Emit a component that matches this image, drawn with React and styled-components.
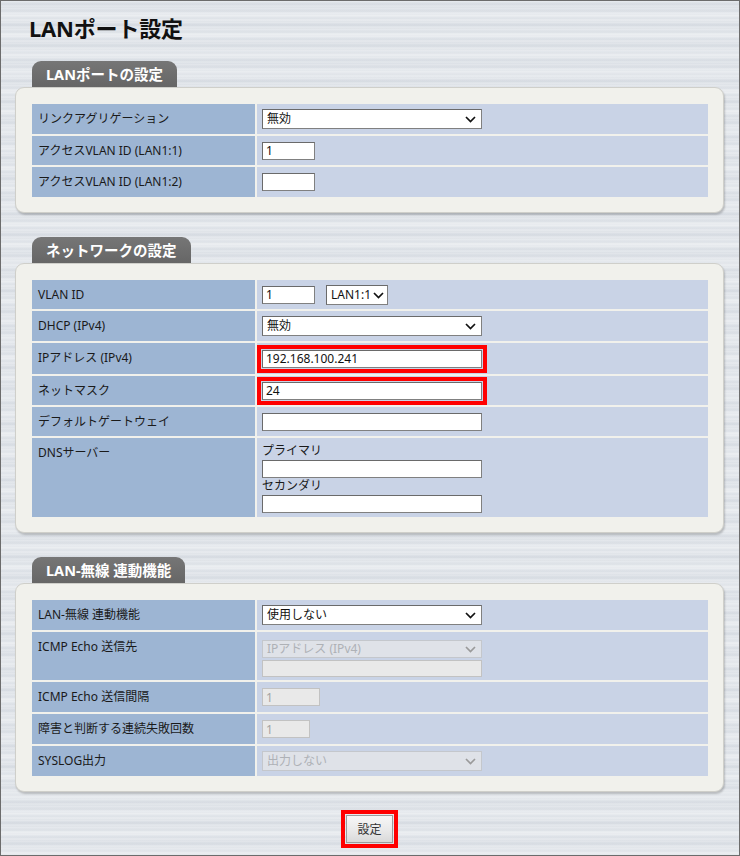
import React from "react";
import styled, { createGlobalStyle, css } from "styled-components";

const FONT = `"Noto Sans", "Noto Sans CJK JP", sans-serif`;

const GlobalStyle = createGlobalStyle`
  html, body { margin: 0; padding: 0; }
  body { font-family: ${FONT}; }
  * { box-sizing: border-box; }
`;

const Page = styled.div`
  width: 740px;
  height: 856px;
  border: 1px solid #6c6c6c;
  padding: 13px 15px 0 14px;
  background-color: #e1e5ea;
  background-image:
    repeating-linear-gradient(180deg, rgba(255,255,255,0.35) 0px, rgba(255,255,255,0) 1px, rgba(0,0,0,0) 2px, rgba(150,160,175,0.10) 3px, rgba(0,0,0,0) 4px, rgba(255,255,255,0.25) 5px, rgba(0,0,0,0) 7px),
    repeating-linear-gradient(180deg, rgba(160,170,185,0) 0px, rgba(160,170,185,0.10) 5px, rgba(160,170,185,0) 11px, rgba(255,255,255,0.22) 15px, rgba(160,170,185,0) 19px);
  font-family: ${FONT};
  color: #222;
`;

const Title = styled.h1`
  height: 28px;
  margin: 0 0 19px 14px;
  font-family: ${FONT};
  font-size: 22px;
  line-height: 28px;
  font-weight: 700;
  color: #111;
  letter-spacing: -0.2px;
`;

const Section = styled.section`
  margin-bottom: ${(p) => p.$gap}px;
`;

const Tab = styled.div`
  display: block;
  width: fit-content;
  margin-left: 17px;
  height: 26px;
  overflow: hidden;
  padding: 0 14px;
  border-radius: 9px 9px 0 0;
  background: linear-gradient(180deg, #767676 0%, #666 100%);
  color: #fff;
  font-size: 14.5px;
  font-weight: 700;
  line-height: 27px;
`;

const Panel = styled.div`
  width: 709px;
  padding: 16px 15px 15px 16px;
  background: #f1f1ec;
  border: 1px solid #cfcfca;
  border-radius: 9px;
  box-shadow: 1px 2px 2px rgba(0, 0, 0, 0.2);
`;

const Table = styled.div`
  display: flex;
  flex-direction: column;
  gap: 2px;
`;

const Row = styled.div`
  display: grid;
  grid-template-columns: 223px 1fr;
  column-gap: 2px;
  height: ${(p) => p.$h || 30}px;
`;

const Label = styled.div`
  background: #9db5d3;
  padding: 7px 6px 0 6px;
  font-size: 12px;
  font-weight: 400;
  line-height: 16px;
  color: #1a1a1a;
  overflow: hidden;
`;

const Value = styled.div`
  background: #c9d3e6;
  padding: 0 5px;
  display: flex;
  ${(p) =>
    p.$stack
      ? css`
          padding-top: ${p.$pt || 5}px;
          flex-direction: column;
          align-items: flex-start;
          justify-content: flex-start;
        `
      : css`
          align-items: center;
          gap: 11px;
        `}
`;

const fieldBase = css`
  font-family: ${FONT};
  font-size: 12px;
  font-weight: 400;
  color: #111;
  background: #fff;
  border: 1px solid #808080;
  border-top-color: #6a6a6a;
  border-left-color: #6a6a6a;
  border-radius: 0;
  outline: none;
  margin: 0;
  ${(p) =>
    p.disabled &&
    css`
      background: #e9e9e9;
      color: #a3a3a3;
      border-color: #c2c2c2;
    `}
`;

const TextInput = styled.input`
  ${fieldBase};
  display: block;
  width: ${(p) => p.$w || 220}px;
  height: ${(p) => p.$h || 18}px;
  padding: 0 3px;
  line-height: 16px;
  ${(p) =>
    p.$mark &&
    css`
      outline: 4px solid #ff0000;
      outline-offset: 1px;
    `}
`;

const SelectWrap = styled.div`
  position: relative;
  width: ${(p) => p.$w || 220}px;
  height: ${(p) => p.$h || 20}px;
  flex: none;
`;

const Select = styled.select`
  ${fieldBase};
  display: block;
  appearance: none;
  -webkit-appearance: none;
  width: 100%;
  height: 100%;
  padding: 0 ${(p) => p.$pr}px 0 4px;
  line-height: 16px;
`;

const Chevron = styled.svg`
  position: absolute;
  right: ${(p) => p.$r}px;
  top: 50%;
  margin-top: -3px;
  pointer-events: none;
`;

const SubLabel = styled.div`
  font-size: 12px;
  line-height: 14px;
  color: #1a1a1a;
  margin: 1px 0 2px 0;
`;

const Footer = styled.div`
  display: flex;
  justify-content: center;
`;

const Button = styled.button`
  width: 47px;
  height: 28px;
  font-family: ${FONT};
  font-size: 12px;
  color: #333;
  background: linear-gradient(180deg, #f7f7f7 0%, #e9e9e9 55%, #d9d9d9 100%);
  border: 1px solid #9c9c9c;
  border-radius: 0;
  outline: 4px solid #ff0000;
  outline-offset: 1px;
  padding: 0;
`;

function Dropdown({ value, w, h, disabled, compact }) {
  return (
    <SelectWrap $w={w} $h={h}>
      <Select disabled={disabled} value={value} onChange={() => {}} $pr={compact ? 14 : 20}>
        <option>{value}</option>
      </Select>
      <Chevron $r={compact ? 4 : 6} width="11" height="7" viewBox="0 0 11 7">
        <polyline
          points="1,1 5.5,5.5 10,1"
          fill="none"
          stroke={disabled ? "#9a9a9a" : "#111"}
          strokeWidth="1.7"
        />
      </Chevron>
    </SelectWrap>
  );
}

export default function App() {
  return (
    <>
      <GlobalStyle />
      <Page>
        <Title>LANポート設定</Title>

        <Section $gap={24}>
          <Tab>LANポートの設定</Tab>
          <Panel>
            <Table>
              <Row $h={30}>
                <Label>リンクアグリゲーション</Label>
                <Value>
                  <Dropdown value="無効" />
                </Value>
              </Row>
              <Row $h={29}>
                <Label>アクセスVLAN ID (LAN1:1)</Label>
                <Value>
                  <TextInput $w={53} defaultValue="1" />
                </Value>
              </Row>
              <Row $h={30}>
                <Label>アクセスVLAN ID (LAN1:2)</Label>
                <Value>
                  <TextInput $w={53} defaultValue="" />
                </Value>
              </Row>
            </Table>
          </Panel>
        </Section>

        <Section $gap={24}>
          <Tab>ネットワークの設定</Tab>
          <Panel>
            <Table>
              <Row $h={29}>
                <Label>VLAN ID</Label>
                <Value>
                  <TextInput $w={53} defaultValue="1" />
                  <Dropdown value="LAN1:1" w={62} compact />
                </Value>
              </Row>
              <Row $h={30}>
                <Label>DHCP (IPv4)</Label>
                <Value>
                  <Dropdown value="無効" />
                </Value>
              </Row>
              <Row $h={31}>
                <Label>IPアドレス (IPv4)</Label>
                <Value>
                  <TextInput $mark defaultValue="192.168.100.241" />
                </Value>
              </Row>
              <Row $h={29}>
                <Label>ネットマスク</Label>
                <Value>
                  <TextInput $mark defaultValue="24" />
                </Value>
              </Row>
              <Row $h={29}>
                <Label>デフォルトゲートウェイ</Label>
                <Value>
                  <TextInput defaultValue="" />
                </Value>
              </Row>
              <Row $h={79}>
                <Label>DNSサーバー</Label>
                <Value $stack $pt={5}>
                  <SubLabel>プライマリ</SubLabel>
                  <TextInput defaultValue="" />
                  <SubLabel>セカンダリ</SubLabel>
                  <TextInput defaultValue="" />
                </Value>
              </Row>
            </Table>
          </Panel>
        </Section>

        <Section $gap={23}>
          <Tab>LAN-無線 連動機能</Tab>
          <Panel>
            <Table>
              <Row>
                <Label>LAN-無線 連動機能</Label>
                <Value>
                  <Dropdown value="使用しない" />
                </Value>
              </Row>
              <Row $h={48}>
                <Label>ICMP Echo 送信先</Label>
                <Value $stack $pt={8}>
                  <Dropdown value="IPアドレス (IPv4)" h={18} disabled />
                  <TextInput disabled defaultValue="" $h={17} style={{ marginTop: 2 }} />
                </Value>
              </Row>
              <Row>
                <Label>ICMP Echo 送信間隔</Label>
                <Value>
                  <TextInput $w={58} disabled defaultValue="1" />
                </Value>
              </Row>
              <Row>
                <Label>障害と判断する連続失敗回数</Label>
                <Value>
                  <TextInput $w={48} disabled defaultValue="1" />
                </Value>
              </Row>
              <Row>
                <Label>SYSLOG出力</Label>
                <Value>
                  <Dropdown value="出力しない" disabled />
                </Value>
              </Row>
            </Table>
          </Panel>
        </Section>

        <Footer>
          <Button type="button">設定</Button>
        </Footer>
      </Page>
    </>
  );
}
